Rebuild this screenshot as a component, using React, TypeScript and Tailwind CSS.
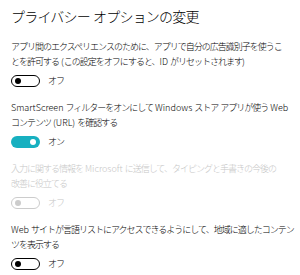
import React from "react";

const jp = { fontFamily: '"Noto Sans CJK JP", "Noto Sans", sans-serif' };

function Toggle({ on, disabled }: { on?: boolean; disabled?: boolean }) {
  if (on) {
    return (
      <div className="flex h-[12px] w-[29px] items-center justify-end rounded-full bg-[#17b0c0] pr-[4px]">
        <div className="h-[6px] w-[6px] rounded-full bg-white" />
      </div>
    );
  }
  const c = disabled ? "border-[#cccccc]" : "border-black";
  const k = disabled ? "bg-[#cccccc]" : "bg-black";
  return (
    <div className={`flex h-[12px] w-[29px] items-center rounded-full border-[1.5px] ${c} pl-[2.5px]`}>
      <div className={`h-[6px] w-[6px] rounded-full ${k}`} />
    </div>
  );
}

function L({ children }: { children: React.ReactNode }) {
  return <span className="tracking-normal whitespace-pre">{children}</span>;
}

function Section({
  lines,
  on,
  disabled,
  className,
}: {
  lines: React.ReactNode[];
  on?: boolean;
  disabled?: boolean;
  className?: string;
}) {
  return (
    <div className={`flex flex-col ${className ?? ""}`}>
      <div
        className={`text-[9px] font-light leading-[15px] tracking-[-1px] whitespace-nowrap ${
          disabled ? "text-[#c6c6c6]" : "text-black"
        }`}
      >
        {lines.map((l, i) => (
          <div key={i}>{l}</div>
        ))}
      </div>
      <div className="mt-[5px] flex items-center gap-[8px]">
        <Toggle on={on} disabled={disabled} />
        <span
          className={`text-[9px] font-light leading-[14px] tracking-[-1px] ${
            disabled ? "text-[#c6c6c6]" : "text-black"
          }`}
        >
          {on ? "オン" : "オフ"}
        </span>
      </div>
    </div>
  );
}

export default function App() {
  return (
    <div className="h-[275px] w-[300px] bg-white pl-[11px] pt-[6px]" style={jp}>
      <div className="text-[14px] font-light leading-[20px] tracking-[-0.8px] text-black">
        プライバシー<L> </L>オプションの変更
      </div>
      <Section
        className="mt-[13px]"
        lines={[
          "アプリ間のエクスペリエンスのために、アプリで自分の広告識別子を使うこ",
          <>
            とを許可する<L> (</L>この設定をオフにすると、<L>ID </L>がリセットされます<L>)</L>
          </>,
        ]}
      />
      <Section
        className="mt-[12px]"
        on
        lines={[
          <>
            <L>SmartScreen </L>フィルターをオンにして<L> Windows </L>ストア<L> </L>アプリが使う<L> Web</L>
          </>,
          <>
            コンテンツ<L> (URL) </L>を確認する
          </>,
        ]}
      />
      <Section
        className="mt-[12px]"
        disabled
        lines={[
          <>
            入力に関する情報を<L> Microsoft </L>に送信して、タイピングと手書きの今後の
          </>,
          "改善に役立てる",
        ]}
      />
      <Section
        className="mt-[12px]"
        lines={[
          <>
            <L>Web </L>サイトが言語リストにアクセスできるようにして、地域に適したコンテン
          </>,
          "ツを表示する",
        ]}
      />
    </div>
  );
}
